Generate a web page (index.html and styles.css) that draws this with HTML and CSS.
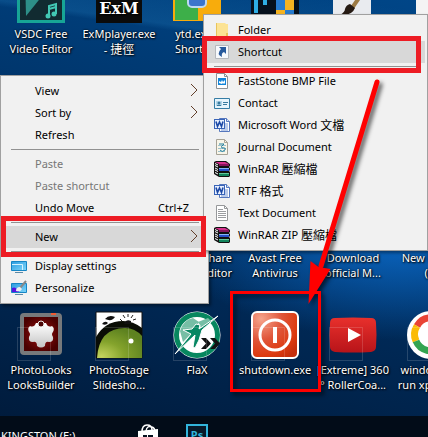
FILE: index.html
```html
<!DOCTYPE html>
<html lang="en">
<head>
<meta charset="utf-8">
<title>Desktop</title>
<link rel="stylesheet" href="styles.css">
</head>
<body>
<svg class="defs" aria-hidden="true">
  <defs>
    <linearGradient id="red" x1="0" y1="0" x2="0" y2="1"><stop offset="0" stop-color="#e8302c"/><stop offset="1" stop-color="#b81419"/></linearGradient>
    <radialGradient id="power" cx=".2" cy=".15" r="1"><stop offset="0" stop-color="#f6a48c"/><stop offset=".45" stop-color="#e0563a"/><stop offset=".8" stop-color="#dd3a10"/><stop offset="1" stop-color="#c42e0c"/></radialGradient>
    <radialGradient id="maroon"><stop offset="0" stop-color="#a01010"/><stop offset="1" stop-color="#4a0000"/></radialGradient>
    <linearGradient id="puzzle" x1="0" y1="0" x2="0" y2="1"><stop offset="0" stop-color="#fff"/><stop offset="1" stop-color="#c4c4c4"/></linearGradient>
    <radialGradient id="lens" cx=".1" cy=".95" r="1"><stop offset="0" stop-color="#c3d45e"/><stop offset=".5" stop-color="#84a32c"/><stop offset="1" stop-color="#5e8220"/></radialGradient>
    <linearGradient id="screen" x1="0" y1="0" x2="1" y2="1"><stop offset="0" stop-color="#2a9be0"/><stop offset="1" stop-color="#7fd6fa"/></linearGradient>
    <symbol id="word" viewBox="0 0 16 16">
      <path d="M5.500 1.500h7l3 3v10h-10z" fill="#fff" stroke="#5577bd"/><path d="M12.500 1.500v3h3" fill="#cfe0fa" stroke="#5577bd"/>
      <path d="M11 7h3M11 9h3M11 11h3M7 13h7" stroke="#7696d4"/>
      <rect x=".5" y="2.500" width="10" height="9" fill="#e8f0ff" stroke="#3964b8"/><path d="M2 4.500l1.500 5L5.500 5l2 4.500L9 4.500" fill="none" stroke="#1c49a6" stroke-width="1.600"/>
    </symbol>
    <symbol id="rar" viewBox="0 0 16 16">
      <path d="M0 1l2-1h10l4 3v2l-1 1 1 1v2l-1 1 1 1v4l-1 1H5L0 13z" fill="#111"/>
      <path d="M1 1h10l4 2H5z" fill="#d4308c"/><path d="M5 3h10v2H5z" fill="#86145a"/>
      <path d="M5 8h10v2H5z" fill="#2450c8"/><path d="M5 7h10v1H5z" fill="#86b4f4"/>
      <path d="M5 13h10v2H5z" fill="#12845c"/><path d="M5 12h10v1H5z" fill="#60c89c"/>
      <path d="M1 2.500l3 1.500M1 4.500L4 6M1 7l3 1.500M1 9l3 1.500M1 11.500l3 1.500" stroke="#fff"/>
    </symbol>
  </defs>
</svg>
<main class="desktop">
  <section class="icons" aria-label="Desktop icons">
    <a class="item c1 r1" href="#vsdc">
      <svg class="pic" viewBox="0 0 48 48"><path d="M0 0h48v48H0z" fill="#17a596"/><path d="M3 0h42v45H3z" fill="#112b31"/><path d="M8 0h34L9 41z" fill="#2d8f88"/><path d="M32 41V31l7-2v10M32 34l7-2" fill="none" stroke="#42c8b4" stroke-width="2"/><circle cx="31" cy="41" r="2.500" fill="#42c8b4"/><circle cx="37" cy="39" r="2.500" fill="#42c8b4"/></svg>
      <span>VSDC Free<br>Video Editor</span></a>
    <a class="item c2 r1" href="#exm">
      <svg class="pic" viewBox="0 0 48 48"><path d="M1 0h46v48H1z" fill="#0b0b0b"/><text class="exm" x="24" y="39">ExM</text></svg>
      <span>ExMplayer.exe<br>- <span lang="zh">捷徑</span></span></a>
    <a class="item c3 r1" href="#ytd">
      <svg class="pic" viewBox="0 0 48 48"><path d="M0 0h48v46H0z" fill="#f8ac0c"/><path d="M2 0h23v45H2z" fill="#3daf49"/><rect x="15" y="14" width="18" height="18" rx="4" fill="#3b75cc" stroke="#bed9f2" stroke-width="2"/></svg>
      <span>ytd.exe -<br>Shortcut</span></a>
    <a class="item c4 r1" href="#shield">
      <svg class="pic" viewBox="0 0 48 48"><path d="M0 0h48v48H0z" fill="#06111d"/><path d="M5 20v18M14 20v10" stroke="#2eaee5" stroke-width="4"/><path d="M25 25q6 0 9-3 3 3 9 3v23H25z" fill="#f5b321"/><path d="M25 25q6 0 9-3v13h-9zM34 35h9v13h-9z" fill="#267bcf"/></svg></a>
    <a class="item c5 r1" href="#paint">
      <svg class="pic" viewBox="0 0 48 48"><path d="M4 0h38v48H4z" fill="#e9ebef"/><path d="M32 20L23 33" stroke="#9c7a45" stroke-width="4"/><path d="M21 29l5 4q-3 8-15 7 5-3 5-6 1-4 5-5" fill="#261b14"/></svg></a>
    <a class="item c6 r1" href="#page"><svg class="pic" viewBox="0 0 48 48"><path d="M9 0h39v48H9z" fill="#f4f4f4"/></svg></a>

    <a class="item text end c3 r3" href="#editor"><span>Share<br>Editor</span></a>
    <a class="item text c4 r3" href="#avast"><span>Avast Free<br>Antivirus</span></a>
    <a class="item text c5 r3" href="#download"><span>Download<br>official M...</span></a>
    <a class="item text c6 r3" href="#new"><span>New Folder<br>(2)</span></a>

    <a class="item link c1 r4" href="#looks">
      <svg class="pic" viewBox="0 0 48 48"><rect x="5" y="4" width="38" height="38" rx="2" fill="url(#maroon)" stroke="#77797b" stroke-width="4"/><path d="M34 3h5" stroke="#ef5a32" stroke-width="2"/><path d="M13 15q4 2 6-3l10 0q2 5 6 3 3 2 1 6-2 2 0 5 1 5-4 5-4-1-4 4-4 3-8 0 0-5-4-4-5 0-4-5 2-3 0-5-2-4 1-6z" fill="url(#puzzle)"/><circle cx="24" cy="13" r="3" fill="#4c0505" stroke="#eee"/></svg>
      <span>PhotoLooks<br>LooksBuilder</span></a>
    <a class="item link c2 r4" href="#stage">
      <svg class="pic" viewBox="0 0 48 48"><path d="M1 1h46v46H1z" fill="#fff" stroke="#111"/><path d="M1 26Q10 10 28 10q10 0 19 7v30H1z" fill="#0a0d05"/><path d="M2 47Q4 17 30 17q10 0 17 8v22z" fill="url(#lens)"/><circle cx="36" cy="30" r="2.500" fill="#fff"/><path d="M10 8q4-5 10-2-3 5-10 2zM7 13q3-4 6-1-2 3-6 1zM30 11q2-3 6-1v3h-7z" fill="#111"/><path d="M25 8l2 2M28 4l2 3M33 3v3M38 4l-2 3M41 8l-3 1" stroke="#222"/></svg>
      <span>PhotoStage<br>Slidesho...</span></a>
    <a class="item link c3 r4" href="#flax">
      <svg class="pic" viewBox="0 0 48 48"><circle cx="24" cy="24" r="21" fill="#fff" stroke="#fff" stroke-width="5"/><circle cx="24" cy="24" r="20.500" fill="#fff" stroke="#07875f" stroke-width="5"/><path d="M7 20Q10 9 20 7l6 4-7 11-9 9z" fill="#76bea5"/><path d="M25 11l10-4 3 3-10 7z" fill="#76bea5"/><path d="M45 5L29 19l-3 10-4 8-2-1 2-12L2 43 18 23l-8-4 9-1 4-5 4 1-1 4z" fill="#078763" stroke="#fff"/><path d="M28 27h5l5 5.500-5 5.500h-5l5-5.500zM37 27h5l5 5.500-5 5.500h-5l5-5.500z" fill="#111"/></svg>
      <span>FlaX</span></a>
    <a class="item link c4 r4" href="#shutdown">
      <svg class="pic" viewBox="0 0 48 48"><rect x="1" y="1" width="46" height="46" rx="5" fill="url(#power)" stroke="#fff" stroke-width="2"/><circle cx="24" cy="24" r="15" fill="none" stroke="#fff" stroke-width="3"/><path d="M22 16h4v16h-4z" fill="#fff"/></svg>
      <span>shutdown.exe</span></a>
    <a class="item link c5 r4" href="#coaster">
      <svg class="pic" viewBox="0 0 48 48"><path d="M6 7q18-1 36 0 5 0 5 5 1 12 0 24 0 4-5 5-18 1-36 0-5-1-5-5-1-12 0-24 0-5 5-5z" fill="url(#red)"/><path d="M19 17l13 7-13 7z" fill="#fff"/></svg>
      <span>[Extreme] 360<br>° RollerCoa...</span></a>
    <a class="item link c6 r4" href="#windows">
      <svg class="pic" viewBox="0 0 48 48"><circle cx="24" cy="24" r="24" fill="#fff"/><g fill="none" stroke-width="7"><path d="M10 15a16 16 0 0 1 28 0" stroke="#e94335"/><path d="M10 15a16 16 0 0 0-1 15" stroke="#fbbb05"/><path d="M9 30a16 16 0 0 0 25 6" stroke="#34a451"/></g></svg>
      <span>windows xp<br>run xp mode</span></a>
  </section>

  <footer class="taskbar">
    <span class="drive">KINGSTON (E:)</span>
    <svg class="store" viewBox="0 0 24 24"><path d="M6 8Q6 1 11 1t5 5M10 7q1-6 6-4 3 1 3 5" fill="none" stroke="#fff" stroke-width="1.500"/><path d="M2 7l20-2v19H2z" fill="#fff"/><path d="M7 11h4v4H7zM12 11h5v4h-5zM7 16h4v4H7zM12 16h5v4h-5z" fill="#06111f"/></svg>
    <svg class="ps" viewBox="0 0 22 22"><path d="M1 1h20v20H1z" fill="#081a2a" stroke="#32b5dc" stroke-width="2"/><text x="11" y="15">Ps</text></svg>
  </footer>

  <nav class="menu context" aria-label="Desktop menu">
    <button>View<svg class="chev" viewBox="0 0 8 14"><path d="M1 1l6 6-6 6"/></svg></button>
    <button>Sort by<svg class="chev" viewBox="0 0 8 14"><path d="M1 1l6 6-6 6"/></svg></button>
    <button>Refresh</button>
    <hr>
    <button disabled>Paste</button>
    <button disabled>Paste shortcut</button>
    <button>Undo Move<kbd>Ctrl+Z</kbd></button>
    <hr>
    <button class="on">New<svg class="chev" viewBox="0 0 8 14"><path d="M1 1l6 6-6 6"/></svg></button>
    <hr>
    <button><svg class="ico" viewBox="0 0 16 16"><path d="M.5 3.500h15v9H.5z" fill="url(#screen)" stroke="#1685c4"/><path d="M1 6.500h10.500V12" fill="none" stroke="#d5f2ff"/><path d="M4 14.500h8" stroke="#5c8aa8"/></svg>Display settings</button>
    <button><svg class="ico" viewBox="0 0 16 16"><path d="M.5 3.500h15v9H.5z" fill="url(#screen)" stroke="#1685c4"/><path d="M1 8q4-2 7 4H1z" fill="#5514e0"/><path d="M15 1L9 8" stroke="#888" stroke-width="2"/><path d="M9 7q-4 0-4 4 5 1 6-2z" fill="#eee"/><path d="M4 14.500h8" stroke="#5c8aa8"/></svg>Personalize</button>
  </nav>

  <nav class="menu submenu" aria-label="New">
    <button><svg class="ico" viewBox="0 0 16 16"><path d="M2 1h9l1 1h2v14H2z" fill="#fce394"/><path d="M2 1h1v15H2zM12 11h2v5h-2z" fill="#e8c45c"/></svg>Folder</button>
    <button class="on"><svg class="ico" viewBox="0 0 16 16"><path d="M1.500 1.500h13v13h-13z" fill="#f7f9fc" stroke="#b5b8bd"/><path d="M5 3h7v7l-2-2q-3 1-2 5-6-3-1-8z" fill="#285a9c"/></svg>Shortcut</button>
    <hr>
    <button><svg class="ico" viewBox="0 0 16 16"><path d="M2.500.500h8l3 3v12h-11z" fill="#fff" stroke="#8d9296"/><path d="M10.500.500v3h3" fill="none" stroke="#8d9296"/><path d="M4 5h8v7H4z" fill="#1285d8"/><path d="M5 10V8l2 1 1-2 1 2 2-2v3l-1 1-1-1-1 1z" fill="#fff"/></svg>FastStone BMP File</button>
    <button><svg class="ico" viewBox="0 0 16 16"><path d="M.5 3.500h15v10H.5z" fill="#e7f5fd" stroke="#367da5"/><path d="M2 6h6v5H2z" fill="#b1d5e8"/><circle cx="5" cy="8" r="1.500" fill="#397ba0"/><path d="M3 10.500h4M9 7.500h5M9 9.500h4" stroke="#397ba0"/></svg>Contact</button>
    <button><svg class="ico"><use href="#word"/></svg>Microsoft Word <span lang="zh">文檔</span></button>
    <button><svg class="ico" viewBox="0 0 16 16"><path d="M2.500.500h8l3 3v12h-11z" fill="#f8f5e9" stroke="#a7a396"/><path d="M10.500.500v3h3" fill="none" stroke="#a7a396"/><path d="M4 6.500h8M4 9.500h8M4 12.500h7" stroke="#9dc0cb"/><path d="M5 5h5q-4 3-2 4 4-1 3 2-3 3-5 0" fill="none" stroke="#23809e"/></svg>Journal Document</button>
    <button><svg class="ico"><use href="#rar"/></svg>WinRAR <span lang="zh">壓縮檔</span></button>
    <button><svg class="ico"><use href="#word"/></svg>RTF <span lang="zh">格式</span></button>
    <button><svg class="ico" viewBox="0 0 16 16"><path d="M2.500.500h8l3 3v12h-11z" fill="#fff" stroke="#96989a"/><path d="M10.500.500v3h3" fill="none" stroke="#96989a"/><path d="M4 4.500h5M4 6.500h8M4 8.500h8M4 10.500h8M4 12.500h8" stroke="#9b9da0"/></svg>Text Document</button>
    <button><svg class="ico"><use href="#rar"/></svg>WinRAR ZIP <span lang="zh">壓縮檔</span></button>
  </nav>

  <svg class="marks" viewBox="0 0 428 437" aria-hidden="true">
    <g fill="none" stroke="#ed1c24" stroke-width="5"><path d="M204.500 38.500h214v32h-214zM3.500 218.500h200v36h-200z"/></g>
    <g class="cast"><path d="M231.500 292.500h88v98h-88z" fill="none" stroke="#f00" stroke-width="3"/><path d="M377 82L321 266" stroke="#f00" stroke-width="5" stroke-linecap="round"/><path d="M308.500 304l2-43 8 6 12 2z" fill="#f00"/></g>
  </svg>
</main>
</body>
</html>
```
FILE: styles.css
```css
* { box-sizing: border-box; }
body {
  margin: 0;
  font: 11px/15px "Noto Sans", "Noto Sans CJK TC", sans-serif;
  overflow: hidden;
}
[lang="zh"] { font: 12px/15px "Noto Sans CJK TC", sans-serif; }
.defs { position: absolute; width: 0; height: 0; }
.desktop {
  position: relative;
  min-height: 100vh;
  display: flex;
  flex-direction: column;
  overflow: hidden;
  background:
    radial-gradient(ellipse 230px 100px at 400px 240px, #0a66c2 0%, #0a5cb400 100%),
    linear-gradient(188deg, #0000 12px, #1b6fae55 60px, #0000 66px),
    linear-gradient(15deg, #001a3a 0%, #002a58 40%, #004688 100%);
}
.icons {
  flex: 1;
  display: grid;
  grid-template-columns: repeat(6, 78px);
  grid-template-rows: repeat(4, 112px);
  margin: -25px 0 -7px 2px;
}
.item {
  position: relative;
  display: flex;
  flex-direction: column;
  align-items: center;
  gap: 3px;
  color: #fff;
  text-align: center;
  text-decoration: none;
  white-space: nowrap;
  text-shadow: 1px 1px 2px #000, 0 0 2px #000;
}
.link::after {
  content: "";
  position: absolute;
  left: 15px;
  top: 16px;
  width: 32px;
  height: 32px;
  border: 1px solid #ffffff26;
}
.text { padding-top: 51px; }
.end { align-items: flex-end; text-align: right; padding-right: 4px; }
.pic { width: 48px; height: 48px; flex: none; }
.c1 { grid-column: 1; } .c2 { grid-column: 2; } .c3 { grid-column: 3; }
.c4 { grid-column: 4; } .c5 { grid-column: 5; } .c6 { grid-column: 6; }
.r1 { grid-row: 1; } .r3 { grid-row: 3; } .r4 { grid-row: 4; }
.exm { font: bold 16px "DejaVu Serif", serif; fill: #fff; text-anchor: middle; }
.taskbar {
  position: relative;
  flex: none;
  height: 21px;
  display: flex;
  align-items: flex-start;
  background: #020c18;
  color: #fff;
  overflow: hidden;
}
.drive { width: 136px; padding: 12px 0 0 1px; }
.store { width: 24px; height: 24px; margin-top: 8px; }
.ps { width: 22px; height: 22px; margin: 8px 0 0 26px; }
.ps text { font: bold 11px "Noto Sans", sans-serif; fill: #32b5dc; text-anchor: middle; }
.menu {
  position: absolute;
  display: flex;
  flex-direction: column;
  padding: 4px 2px;
  background: #f1f1f1;
  border: 1px solid #a0a0a0;
  box-shadow: 2px 2px 3px #0006;
}
.context { left: 0; top: 75px; width: 209px; }
.submenu { left: 203px; top: 14px; width: 225px; }
.menu button {
  position: relative;
  display: flex;
  align-items: center;
  height: 22px;
  padding: 0 8px 2px 32px;
  border: 0;
  background: none;
  color: #000;
  font: inherit;
  text-align: left;
  white-space: pre;
}
.menu button:disabled { color: #777; }
.menu .on { background: #d8d8d8; }
.menu hr { width: 188px; height: 1px; margin: 3px 8px; border: 0; background: #919191; }
.submenu hr { width: 204px; }
.ico { position: absolute; left: 8px; top: 3px; width: 16px; height: 16px; }
.chev { width: 8px; height: 14px; margin-left: auto; fill: none; stroke: #63402c; }
kbd { margin-left: auto; padding-right: 9px; font: inherit; }
.marks { position: absolute; left: 0; top: 0; width: 428px; height: 437px; pointer-events: none; }
.cast { filter: drop-shadow(3px 3px 2px #0009); }
```
